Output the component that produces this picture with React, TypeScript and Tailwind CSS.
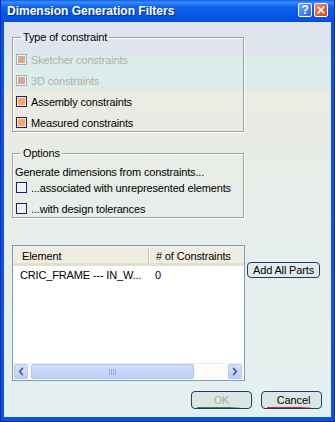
import type React from "react";

// Windows XP style dialog, CATIA look
const ui = "font-['Liberation_Sans',Arial,sans-serif] text-[11px] tracking-[-0.15px] leading-[14px]";

type BoxState = "disabled" | "checked" | "empty";

const Box: React.FC<{ state: BoxState }> = ({ state }) => {
  if (state === "disabled")
    return (
      <span className="flex w-[11px] h-[11px] shrink-0 border border-[#9fb0c4] p-[1px] bg-[#eef0ec]">
        <span className="flex-1 bg-[#d8aa8a]" />
      </span>
    );
  if (state === "checked")
    return (
      <span className="flex w-[11px] h-[11px] shrink-0 border border-[#1c1f6e] p-[1px] bg-[#fbe9d6]">
        <span className="flex-1 bg-[#f6a65e]" />
      </span>
    );
  return <span className="flex w-[11px] h-[11px] shrink-0 border border-[#1c1f6e] bg-[#eef3f3]" />;
};

const CheckRow: React.FC<{ state: BoxState; label: string }> = ({ state, label }) => (
  <div className="h-[17px] flex items-center">
    <Box state={state} />
    <span className={"ml-[4px] " + (state === "disabled" ? "text-[#b3b0a4]" : "text-black")}>{label}</span>
  </div>
);

const constraintRows: { state: BoxState; label: string }[] = [
  { state: "disabled", label: "Sketcher constraints" },
  { state: "disabled", label: "3D constraints" },
  { state: "checked", label: "Assembly constraints" },
  { state: "checked", label: "Measured constraints" },
];

const groupBox =
  "w-[232px] border border-[#a4a29a] shadow-[inset_1px_1px_0_#ffffff,1px_1px_0_#ffffff] px-[1px] pb-0";

const Chevron: React.FC<{ dir: "left" | "right" }> = ({ dir }) => (
  <svg viewBox="0 0 14 15" className="w-[14px] h-[15px]" fill="none" stroke="#4d6185" strokeWidth={2}>
    {dir === "left" ? (
      <path d="M8.5 4 L5.5 7.5 L8.5 11" strokeLinecap="square" />
    ) : (
      <path d="M5.5 4 L8.5 7.5 L5.5 11" strokeLinecap="square" />
    )}
  </svg>
);

const ScrollBtn: React.FC<{ dir: "left" | "right" }> = ({ dir }) => (
  <div className="w-[14px] h-[15px] rounded-[2px] border border-[#b6c9f5] bg-[linear-gradient(to_bottom,#d4e0fd,#bccffa)] flex items-center justify-center">
    <Chevron dir={dir} />
  </div>
);

const App: React.FC = () => {
  return (
    <div className={"w-[335px] h-[422px] flex flex-col bg-[#0a54e0] border-x border-b border-[#0030a8] " + ui}>
      {/* Title bar */}
      <div className="h-[22px] shrink-0 flex items-center pl-[6px] pr-[6px] bg-[linear-gradient(to_bottom,#0a5cf0_0%,#3b8cff_10%,#0e62f0_30%,#0758e8_60%,#0550e0_100%)]">
        <span className="flex-1 text-white font-bold text-[12px] tracking-[0px] [text-shadow:1px_1px_0_#0a2a8a]">
          Dimension Generation Filters
        </span>
        <div className="flex gap-[2px] -mt-[2px]">
          <div className="w-[14px] h-[14px] rounded-[2px] border border-white bg-[linear-gradient(135deg,#6aa2ff,#2a66e8)] flex items-center justify-center text-white font-bold text-[12px] leading-none">
            ?
          </div>
          <div className="w-[14px] h-[14px] rounded-[2px] border border-white bg-[linear-gradient(135deg,#f08a6a,#d6401c)] flex items-center justify-center">
            <svg viewBox="0 0 10 10" className="w-[8px] h-[8px]" stroke="#ffffff" strokeWidth={2} strokeLinecap="square">
              <path d="M1.5 1.5 L8.5 8.5 M8.5 1.5 L1.5 8.5" />
            </svg>
          </div>
        </div>
      </div>

      {/* Client area */}
      <div className="flex-1 mx-[3px] mb-[4px] flex flex-col pl-[8px] bg-[linear-gradient(to_bottom,#dee5ef_0px,#dee5ef_32px,#dcecea_34px,#dcecea_66px,#ebece2_70px,#e8ece6_130px,#e6eeec_220px,#e4f0f0_395px)]">
        {/* Type of constraint */}
        <fieldset className={"mt-[8px] " + groupBox}>
          <legend className="ml-[7px] px-[2px]">Type of constraint</legend>
          <div className="pt-[7px] flex flex-col gap-[4px] pl-[2px]">
            {constraintRows.map((r) => (
              <CheckRow key={r.label} state={r.state} label={r.label} />
            ))}
          </div>
        </fieldset>

        {/* Options */}
        <fieldset className={"mt-[14px] " + groupBox}>
          <legend className="ml-[7px] px-[2px]">Options</legend>
          <div className="pt-[5px] flex flex-col pl-[1px]">
            <div className="h-[14px]">Generate dimensions from constraints...</div>
            <div className="flex flex-col gap-[4px] pl-[1px]">
              <CheckRow state="empty" label="...associated with unrepresented elements" />
              <CheckRow state="empty" label="...with design tolerances" />
            </div>
          </div>
        </fieldset>

        {/* Element list */}
        <div className="mt-[27px] flex items-start">
          <div className="w-[233px] h-[136px] border border-[#7f9db9] bg-white flex flex-col">
            <div className="h-[20px] flex items-stretch bg-[#efede0] shadow-[inset_0_-3px_0_#e2dfcf,inset_0_-2px_0_#d6d2c2]">
              <div className="w-[135px] pl-[9px] flex items-center">Element</div>
              <div className="my-[3px] w-[2px] border-l border-[#c7c5b2] bg-white" />
              <div className="flex-1 pl-[8px] flex items-center">
                <span className="-ml-[2px]"># of Constraints</span>
              </div>
            </div>
            <div className="h-[17px] flex items-center">
              <div className="w-[135px] pl-[7px] whitespace-nowrap">CRIC_FRAME --- IN_W...</div>
              <div className="pl-[7px]">0</div>
            </div>
            <div className="flex-1" />
            {/* Horizontal scrollbar */}
            <div className="h-[17px] flex items-center pl-[1px] pr-[2px] bg-[#fcfcf8] shadow-[inset_0_1px_0_#eeede5]">
              <ScrollBtn dir="left" />
              <div className="ml-[3px] w-[163px] h-[15px] rounded-[2px] border border-[#aec4f6] bg-[linear-gradient(to_bottom,#d0ddfd,#bfd0fa)] flex items-center justify-center gap-[1px]">
                <span className="w-[1px] h-[6px] bg-[#8fb0f6]" />
                <span className="w-[1px] h-[6px] bg-[#8fb0f6]" />
                <span className="w-[1px] h-[6px] bg-[#8fb0f6]" />
                <span className="w-[1px] h-[6px] bg-[#8fb0f6]" />
              </div>
              <div className="flex-1" />
              <ScrollBtn dir="right" />
            </div>
          </div>
          <button className="ml-[2px] mt-[17px] w-[73px] h-[16px] rounded-[4px] border border-[#1d3b6e] bg-[#e3ebea] flex items-center justify-center text-black">
            Add All Parts
          </button>
        </div>

        {/* Dialog buttons */}
        <div className="mt-[10px] flex justify-end gap-[9px] pr-[9px]">
          <button className="w-[61px] h-[18px] rounded-[4px] border border-[#1d3b6e] bg-[#dbe6e3] flex flex-col text-[#a9aca8]">
            <span className="flex-1 flex items-center justify-center pt-[1px]">OK</span>
            <span className="ml-[5px] mb-[0px] w-[43px] h-[2px] bg-[linear-gradient(to_right,#1e9a44_75%,#9fd2ae)]" />
          </button>
          <button className="w-[61px] h-[18px] rounded-[4px] border border-[#1d3b6e] bg-[#dbe6e3] flex flex-col text-black">
            <span className="flex-1 flex items-center justify-center pt-[1px] pl-[4px]">Cancel</span>
            <span className="ml-[5px] w-[44px] h-[2px] bg-[linear-gradient(to_right,#e0222a_75%,#f0a0a8)]" />
          </button>
        </div>
      </div>
    </div>
  );
};

export default App;
